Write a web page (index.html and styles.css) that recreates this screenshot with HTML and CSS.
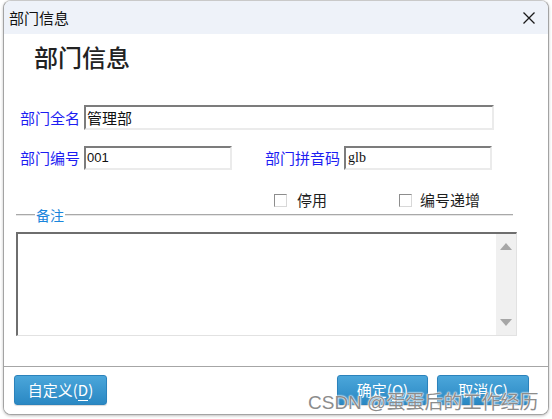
FILE: index.html
```html
<!DOCTYPE html>
<html lang="zh-CN">
<head>
<meta charset="utf-8">
<title>部门信息</title>
<link rel="stylesheet" href="styles.css">
</head>
<body>
<div class="window">
  <div class="titlebar">
    <span class="title">部门信息</span>
    <svg class="close" width="12" height="12" viewBox="0 0 12 12"><path d="M0.5 0.5 L11.5 11.5 M11.5 0.5 L0.5 11.5" stroke="#1a1a1a" stroke-width="1.3" fill="none"/></svg>
  </div>
  <div class="content">
    <div class="heading">部门信息</div>
    <div class="row row1">
      <span class="label">部门全名</span>
      <div class="input wide"><span class="val cjk">管理部</span></div>
    </div>
    <div class="row row2">
      <span class="label">部门编号</span>
      <div class="input short"><span class="val num">001</span></div>
      <span class="label label2">部门拼音码</span>
      <div class="input short"><span class="val serif">glb</span></div>
    </div>
    <div class="checks">
      <span class="check"><span class="box"></span>停用</span>
      <span class="check check2"><span class="box"></span>编号递增</span>
    </div>
    <div class="group">
      <span class="gline lead"></span>
      <span class="glabel">备注</span>
      <span class="gline rest"></span>
    </div>
    <div class="memo">
      <div class="memo-body"></div>
      <div class="scroll">
        <span class="arrow up"></span>
        <span class="arrow down"></span>
      </div>
    </div>
  </div>
  <div class="footer">
    <button class="btn btn-custom">自定义(<u>D</u>)</button>
    <div class="right-btns">
      <button class="btn btn-ok">确定(<u>O</u>)</button>
      <button class="btn btn-cancel">取消(<u>C</u>)</button>
    </div>
  </div>
  <div class="watermark">CSDN @蛋蛋后的工作经历</div>
</div>
</body>
</html>
```
FILE: styles.css
```css
* { box-sizing: border-box; }
html, body { margin: 0; padding: 0; background: #ffffff; }
body {
  font-family: "Noto Sans CJK SC", "Liberation Sans", sans-serif;
  width: 552px; height: 419px; overflow: hidden;
}
.window {
  position: relative;
  margin-left: 3px;
  width: 546px;
  height: 415px;
  border: 1px solid #a3a3a3;
  border-top-color: #c9c9c9;
  border-radius: 8px;
  overflow: hidden;
  display: flex;
  flex-direction: column;
  background: #ffffff;
  box-shadow: 0 1px 3px rgba(0,0,0,0.25);
}
.titlebar {
  height: 33px;
  flex: none;
  background: #eef2f9;
  display: flex;
  align-items: center;
  justify-content: space-between;
  padding: 0 13px 0 5px;
}
.title { font-size: 15px; color: #111; line-height: 20px; }
.close { display: block; }
.content {
  flex: 1;
  background: #fff;
  display: flex;
  flex-direction: column;
}
.heading {
  margin-top: 9px;
  margin-left: 30px;
  font-size: 24px;
  line-height: 28px;
  font-weight: 500;
  color: #222;
}
.row { display: flex; align-items: center; margin-left: 16px; }
.row1 { margin-top: 34px; height: 25px; }
.row2 { margin-top: 16px; height: 24px; }
.label {
  width: 64px;
  font-size: 15px;
  color: #1d1df2;
  line-height: 20px;
  white-space: nowrap;
}
.label2 { margin-left: 33px; width: 79px; }
.input {
  height: 100%;
  border-top: 2px solid #7c7c7c;
  border-left: 2px solid #7c7c7c;
  border-right: 2px solid #ebebeb;
  border-bottom: 2px solid #ebebeb;
  background: #fff;
  display: flex;
  align-items: center;
  padding-left: 1px;
}
.wide { width: 410px; }
.short { width: 148px; }
.val { color: #111; line-height: 18px; }
.cjk { font-size: 15px; }
.num { font-size: 13px; font-family: "Liberation Sans", sans-serif; }
.serif { font-size: 14px; font-family: "Liberation Serif", serif; padding-left: 1px; }
.checks {
  margin-top: 23px;
  height: 14px;
  display: flex;
  align-items: center;
  margin-left: 270px;
}
.check {
  display: flex;
  align-items: center;
  font-size: 15px;
  color: #1e1e1e;
  line-height: 16px;
}
.check2 { margin-left: 72px; }
.box {
  width: 13px; height: 13px;
  border: 1px solid #8d8d8d;
  border-right-color: #d8d8d8;
  border-bottom-color: #d8d8d8;
  background: #fff;
  margin-right: 10px;
}
.check2 .box { margin-right: 8px; }
.group {
  height: 16px;
  display: flex;
  align-items: center;
  margin-left: 12px;
  width: 497px;
}
.gline { height: 1px; background: #a9a9a9; border-bottom: 1px solid #e6e6e6; box-sizing: content-box; }
.lead { width: 19px; }
.rest { flex: 1; }
.glabel { font-size: 14px; color: #1a86dc; line-height: 16px; padding: 0 1px; }
.memo {
  margin-top: 9px;
  margin-left: 12px;
  width: 501px;
  height: 104px;
  border-top: 2px solid #6e6e6e;
  border-left: 2px solid #6e6e6e;
  border-right: 1px solid #e2e2e2;
  border-bottom: 1px solid #e2e2e2;
  display: flex;
}
.memo-body { flex: 1; background: #fff; }
.scroll {
  width: 20px;
  background: #f0f0f0;
  display: flex;
  flex-direction: column;
  align-items: center;
  justify-content: space-between;
  padding: 9px 0 9px;
}
.arrow { width: 0; height: 0; border-left: 6px solid transparent; border-right: 6px solid transparent; }
.up { border-bottom: 7px solid #a6a6a6; }
.down { border-top: 7px solid #a6a6a6; }
.footer {
  height: 48px;
  flex: none;
  border-top: 1px solid #a6a6a6;
  background: #ffffff;
  display: flex;
  align-items: flex-start;
  justify-content: space-between;
  padding: 8px 19px 0 10px;
}
.right-btns { display: flex; gap: 9px; }
.btn {
  height: 30px;
  border: 1px solid #2b82bb;
  border-radius: 3px;
  background: linear-gradient(#4ba6da, #2a88c3);
  color: #fff;
  font-family: "Noto Sans CJK SC", sans-serif;
  font-size: 15px;
  line-height: 20px;
  padding: 0;
  box-shadow: 0 1px 1px rgba(0,0,0,0.15);
}
.btn u { text-decoration: none; border-bottom: 1px solid #fff; }
.btn-custom { width: 93px; }
.btn-ok { width: 91px; }
.btn-cancel { width: 92px; }
.watermark {
  position: absolute;
  left: 304px;
  top: 390px;
  font-family: "Liberation Sans", "Noto Sans CJK SC", sans-serif;
  font-size: 19px;
  line-height: 24px;
  color: #8c8c8c;
  white-space: nowrap;
  text-shadow: 0 0 2px #fff, 0 0 2px #fff, 0 0 1px #fff;
}
```
